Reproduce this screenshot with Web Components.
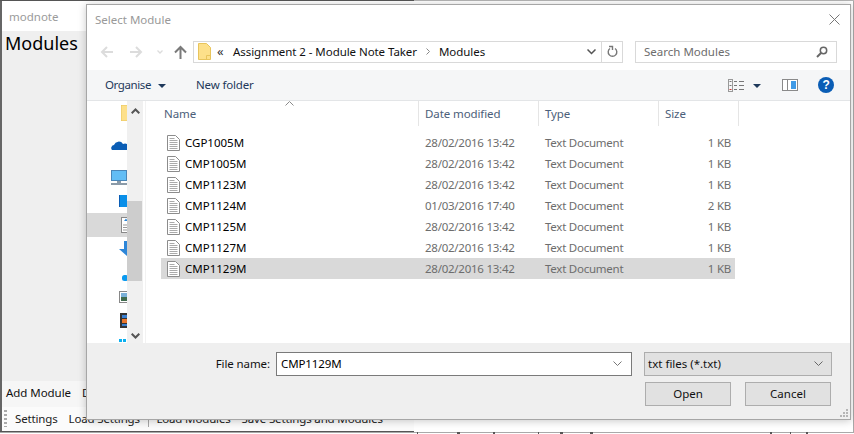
<!DOCTYPE html>
<html>
<head>
<meta charset="utf-8">
<title>modnote</title>
<style>
  html, body { margin: 0; height: 100%; overflow: hidden; background: #fff; }
  body { font: 11.5px "Noto Sans", sans-serif; }
</style>
</head>
<body>
<app-window>
  <file-dialog></file-dialog>
</app-window>

<script>
// small helper so each component only has to deal with its own markup
class Base extends HTMLElement {
  constructor(html) {
    super();
    this.attachShadow({ mode: 'open' });
    this.shadowRoot.innerHTML = html;
  }
}

class AppWindow extends Base {
  constructor() {
    super(`
      <style>
        :host { display: block; width: 854px; height: 434px; position: relative; overflow: hidden; background: #fff; }
        .back { width: 854px; height: 431px; border-top: 1px solid #b4b4b4; border-bottom: 1px solid #a9a9a9; display: flex; }
        .main { width: 412px; height: 431px; border-left: 2px solid #666; display: flex; flex-direction: column; background: #efefef; }
        .main-top { height: 1px; margin: -1px 0 0 -2px; background: #555; width: 414px; flex: none; }
        .title { height: 30px; flex: none; display: flex; align-items: center; background: #fff; color: #9b9b9b; font-size: 11.500px; padding-left: 7px; box-sizing: border-box; }
        .heading { flex: 1; padding: 0 0 0 3px; font-size: 18px; color: #000; line-height: 24px; }
        .actions { height: 26px; flex: none; box-sizing: border-box; background: #f6f6f6; padding: 0 0 3px 4px; display: flex; gap: 11px; align-items: center; color: #111; white-space: nowrap; letter-spacing: -.05px; }
        .tools { height: 24px; flex: none; box-sizing: border-box; background: #fbfbfb; display: flex; align-items: center; gap: 11px; color: #222; padding: 0 0 2px 2px; white-space: nowrap; letter-spacing: -.15px; }
        .grip { width: 3px; height: 17px; background: repeating-linear-gradient(#aaa 0 2px, transparent 2px 4px); margin-right: -3px; }
        .sep { width: 1px; height: 17px; background: #a8a8a8; margin: 0 -4px 0 -2.500px; }
        .foot { height: 1px; margin-left: -2px; width: 414px; background: #555; flex: none; }
        .right { flex: 1; border-right: 1px solid #a9a9a9; }
        svg.ticks { position: absolute; left: 414px; top: 432px; }
      </style>
      <div class="back">
        <div class="main">
          <div class="main-top"></div>
          <div class="title">modnote</div>
          <div class="heading">Modules</div>
          <div class="actions"><span>Add Module</span><span>Delete</span></div>
          <div class="tools">
            <span class="grip"></span>
            <span>Settings</span><span>Load Settings</span><span class="sep"></span><span>Load Modules</span><span>Save Settings and Modules</span>
          </div>
          <div class="foot"></div>
        </div>
        <div class="right"></div>
      </div>
      <svg class="ticks" width="439" height="2" fill="#555"><rect x="3" width="1" height="2"/><rect x="43" width="3" height="2"/><rect x="79" width="2" height="2"/><rect x="124" width="1" height="2"/><rect x="146" width="3" height="2"/><rect x="176" width="3" height="2"/><rect x="356" width="2" height="2"/><rect x="376" width="1" height="2"/><rect x="392" width="2" height="2"/></svg>
      <slot></slot>
    `);
  }
}

class FileDialog extends Base {
  constructor() {
    super(`
      <style>
        :host { position: absolute; left: 86px; top: 4px; width: 765px; height: 416px; box-sizing: border-box; border: 1px solid #a6a6a6; background: #fff; display: flex; flex-direction: column; box-shadow: 0 1px 8px rgba(0,0,0,.22); }
        .title { height: 29px; flex: none; display: flex; align-items: center; justify-content: space-between; padding: 0 10px 0 8px; color: #999; }
      </style>
      <div class="title"><span>Select Module</span>
        <svg width="11" height="11" stroke="#777" fill="none"><path d="M.5.500l10 10M10.500.500l-10 10"/></svg>
      </div>
      <nav-bar></nav-bar>
      <command-bar></command-bar>
      <file-pane></file-pane>
      <dialog-footer></dialog-footer>
    `);
  }
}

class NavBar extends Base {
  constructor() {
    super(`
      <style>
        :host { display: flex; height: 36px; flex: none; align-items: center; box-sizing: border-box; padding: 0 12px 1px 13px; }
        svg { flex: none; }
        .addr { margin-left: 6px; width: 430px; height: 22px; box-sizing: border-box; border: 1px solid #d9d9d9; display: flex; align-items: center; padding-left: 4px; color: #111; }
        .crumbs { flex: 1; display: flex; align-items: center; margin-left: 6px; white-space: nowrap; letter-spacing: -.06px; padding-bottom: 1px; }
        .more { width: 16px; color: #333; font-size: 13px; line-height: 14px; }
        .drop { width: 20px; display: flex; justify-content: center; }
        .refresh { width: 20px; height: 100%; border-left: 1px solid #d9d9d9; display: flex; align-items: center; justify-content: center; }
        .search { margin-left: 12px; width: 202px; height: 22px; box-sizing: border-box; border: 1px solid #d9d9d9; display: flex; align-items: center; justify-content: space-between; padding: 0 8px; color: #6d6d6d; }
      </style>
      <svg width="13" height="12" stroke="#dcdcdc" stroke-width="2" fill="none" style="margin-right:17px"><path d="M13 6H2M7 1L2 6l5 5"/></svg>
      <svg width="13" height="12" stroke="#dcdcdc" stroke-width="2" fill="none"><path d="M0 6h11M6 1l5 5-5 5"/></svg>
      <svg width="6" height="4" stroke="#dcdcdc" stroke-width="1.300" fill="none" style="margin-left:14px"><path d="M.5.500l2.500 2.500 2.500-2.500"/></svg>
      <svg width="13" height="14" stroke="#7a7a7a" stroke-width="2" fill="none" style="margin-left:11px"><path d="M6.500 14V2M1 7.500l5.500-5.500 5.500 5.500"/></svg>
      <div class="addr">
        <svg width="13" height="17"><path d="M.5.500h8l4 4v12H.5z" fill="#fde08a" stroke="#e8c45c"/><path d="M8.500 16.500v-4h4" fill="none" stroke="#e8c45c"/></svg>
        <div class="crumbs">
          <span class="more">«</span><span>Assignment 2 - Module Note Taker</span>
          <svg width="4" height="7" stroke="#888" fill="none" style="margin:0 9px"><path d="M.5.500l3 3-3 3"/></svg>
          <span>Modules</span>
        </div>
        <span class="drop"><svg width="9" height="6" stroke="#555" stroke-width="1.500" fill="none"><path d="M.5.500l4 4 4-4"/></svg></span>
        <span class="refresh"><svg width="11" height="13" stroke="#777" stroke-width="1.400" fill="none"><path d="M3 3.500a4.300 4.300 0 1 0 5 0M2 1.500h3.500V5"/></svg></span>
      </div>
      <div class="search"><span>Search Modules</span>
        <svg width="12" height="12" stroke="#666" fill="none"><circle cx="7.500" cy="4.500" r="3.200" stroke-width="1.500"/><path d="M5 7L1 11" stroke-width="2"/></svg>
      </div>
    `);
  }
}

class CommandBar extends Base {
  constructor() {
    super(`
      <style>
        :host { display: flex; height: 31px; flex: none; align-items: center; box-sizing: border-box; background: #f5f6f7; border-bottom: 1px solid #e3e5e7; color: #1e395b; padding: 0 16px 0 18px; letter-spacing: -.15px; }
        .caret { width: 0; height: 0; border: 4px solid transparent; border-top: 4px solid #1e395b; border-bottom: 0; display: inline-block; }
        .grow { flex: 1; }
        .label { margin-bottom: 2px; }
        .help { width: 16px; height: 16px; border-radius: 50%; background: #0a5db5; color: #fff; font: bold 12px "Liberation Sans", sans-serif; display: flex; align-items: center; justify-content: center; margin-left: 20px; }
      </style>
      <span class="label" style="width:47px;letter-spacing:-.4px">Organise</span><span class="caret" style="margin:1px 30px 0 6px"></span><span class="label">New folder</span>
      <span class="grow"></span>
      <svg width="16" height="13" fill="none"><rect x=".5" y=".5" width="4" height="12" stroke="#999"/><path d="M1.500 2.500h2M1.500 6.500h2" stroke="#777"/><path d="M1.500 10.500h2" stroke="#c33"/><path d="M6 2.500h3M11 2.500h5M6 6.500h3M11 6.500h5M6 10.500h3M11 10.500h5" stroke="#777"/></svg>
      <span class="caret" style="margin:1px 21px 0 9px"></span>
      <svg width="16" height="12"><rect x=".5" y=".5" width="15" height="11" fill="#fff" stroke="#8a8a8a"/><rect x="9" y="2" width="5" height="8" fill="#3f9ae6"/><path d="M5.500 1v10" stroke="#8a8a8a"/></svg>
      <span class="help">?</span>
    `);
  }
}

class SideBar extends Base {
  constructor() {
    super(`
      <style>
        :host { display: flex; flex: none; width: 59px; height: 100%; }
        .items { width: 40px; overflow: hidden; display: flex; flex-direction: column; flex: none; }
        .item { flex: none; display: flex; align-items: flex-start; box-sizing: border-box; }
        .sel { background: #d9d9d9; }
        .bar { width: 16px; background: #f0f0f0; display: flex; flex-direction: column; align-items: center; flex: none; }
        .thumb { width: 15px; height: 80px; background: #cdcdcd; margin: 87px 1px 52px 0; }
        .up { margin-top: 7px; }
        .gap { width: 1px; background: #f2f2f2; margin-left: auto; }
      </style>
      <div class="items">
        <div class="item" style="height:22px;padding:4px 0 0 34px"><svg width="14" height="16"><rect width="14" height="16" fill="#fde08a" stroke="#e8c45c"/></svg></div>
        <div class="item" style="height:47px;padding:17px 0 0 24px"><svg width="18" height="11"><path d="M1 10a3 3 0 0 1 2-5 5 5 0 0 1 9-1 4 4 0 0 1 5 6z" fill="#0a5db5"/></svg></div>
        <div class="item" style="height:25px;padding-left:24px"><svg width="16" height="15"><rect x=".5" y=".5" width="15" height="10" fill="#62bdf5" stroke="#4a86b8"/><rect x="6" y="11" width="4" height="2" fill="#8a9aa8"/><rect y="13" width="16" height="2" fill="#8a9aa8"/></svg></div>
        <div class="item" style="height:18px;padding-left:32px"><svg width="8" height="12"><rect width="8" height="12" fill="#0a8fe8"/><rect width="1" height="12" fill="#0a5db5"/></svg></div>
        <div class="item sel" style="height:24px;padding:4px 0 0 34px"><svg width="6" height="16"><rect x=".5" y=".5" width="9" height="15" fill="#fff" stroke="#888"/><path d="M3 4l2-2.500 2 2.500z" fill="#2a86d8"/><path d="M2 8h6M2 10.500h6M2 13h6" stroke="#999"/></svg></div>
        <div class="item" style="height:38px;padding:4px 0 0 32px"><svg width="8" height="15"><path d="M5 0h3v15L0 8h5z" fill="#2d86d8"/></svg></div>
        <div class="item" style="height:16px;padding-left:35px"><svg width="5" height="6"><rect width="6" height="6" rx="2.500" fill="#0a9af0"/></svg></div>
        <div class="item" style="height:22px;padding-left:32px"><svg width="8" height="12"><rect x=".5" y=".5" width="9" height="11" fill="#fff" stroke="#888"/><rect x="2" y="2" width="6" height="4" fill="#7ab0d8"/><rect x="2" y="6" width="6" height="4" fill="#3f6b4e"/></svg></div>
        <div class="item" style="height:26px;padding-left:33px"><svg width="7" height="15"><rect width="7" height="15" fill="#333"/><rect x="2" y="2" width="5" height="3" fill="#3a7fd0"/><rect x="2" y="6" width="5" height="4" fill="#e8762c"/><rect x="2" y="11" width="5" height="2" fill="#3a7fd0"/></svg></div>
        <div class="item" style="height:4px;padding-left:32px"><svg width="8" height="3"><rect width="3" height="3" fill="#0ab0f0"/><rect x="4" width="3" height="3" fill="#0ab0f0"/></svg></div>
      </div>
      <div class="bar">
        <svg class="up" width="9" height="6" stroke="#555" stroke-width="2" fill="none"><path d="M.7 5.300L4.500 1.500l3.800 3.800"/></svg>
        <div class="thumb"></div>
        <svg width="9" height="6" stroke="#555" stroke-width="2" fill="none"><path d="M.7.700l3.800 3.800 3.800-3.800"/></svg>
      </div>
      <div class="gap"></div>
    `);
  }
}

class FileRow extends Base {
  constructor() {
    super(`
      <style>
        :host { display: grid; grid-template-columns: 264px 120px 120px 70px; height: 21px; align-items: center; color: #6d6d6d; width: 574px; letter-spacing: -.25px; white-space: nowrap; }
        :host([selected]) { background: #d9d9d9; }
        .name { display: flex; align-items: center; gap: 5px; padding-left: 6px; color: #000; letter-spacing: 0; }
        .size { text-align: right; padding-right: 4px; }
      </style>
      <span class="name">
        <svg width="13" height="16" fill="none"><path d="M.5.500h8l4 4v11H.5z" fill="#fff" stroke="#8c8c8c"/><path d="M2.500 5.500h8M2.500 7.500h8M2.500 9.500h8M2.500 11.500h8M2.500 13.500h8M2.500 3.500h5" stroke="#aaa"/></svg>
        <slot></slot>
      </span>
      <span><slot name="date"></slot></span>
      <span><slot name="type"></slot></span>
      <span class="size"><slot name="size"></slot></span>
    `);
  }
}

class FilePane extends Base {
  constructor() {
    super(`
      <style>
        :host { display: flex; flex: 1; min-height: 0; overflow: hidden; }
        .list { flex: 1; padding-left: 15px; position: relative; }
        .head { display: grid; grid-template-columns: 258px 120px 120px 80px; height: 25px; width: 578px; color: #4c607a; letter-spacing: -.1px; }
        .head span { border-right: 1px solid #e5e5e5; padding: 5px 0 0 6px; box-sizing: border-box; }
        .head span:first-child { padding-left: 3px; }
        .sort { position: absolute; left: 139px; top: 0; }
        .rows { margin-top: 6px; }
      </style>
      <side-bar></side-bar>
      <div class="list">
        <svg class="sort" width="9" height="5" stroke="#8a8a8a" fill="none"><path d="M.5 4.500l4-4 4 4"/></svg>
        <div class="head"><span>Name</span><span>Date modified</span><span>Type</span><span>Size</span></div>
        <div class="rows" id="rows"></div>
      </div>
    `);
    const files = [
      ['CGP1005M', '28/02/2016 13:42', '1 KB'],
      ['CMP1005M', '28/02/2016 13:42', '1 KB'],
      ['CMP1123M', '28/02/2016 13:42', '1 KB'],
      ['CMP1124M', '01/03/2016 17:40', '2 KB'],
      ['CMP1125M', '28/02/2016 13:42', '1 KB'],
      ['CMP1127M', '28/02/2016 13:42', '1 KB'],
      ['CMP1129M', '28/02/2016 13:42', '1 KB'],
    ];
    const rows = this.shadowRoot.getElementById('rows');
    files.forEach(([name, date, size], i) => {
      const row = document.createElement('file-row');
      if (i === files.length - 1) row.setAttribute('selected', '');
      row.innerHTML = `${name}<span slot="date">${date}</span><span slot="type">Text Document</span><span slot="size">${size}</span>`;
      rows.appendChild(row);
    });
  }
}

class DialogFooter extends Base {
  constructor() {
    super(`
      <style>
        :host { display: block; height: 76px; flex: none; box-sizing: border-box; background: #efefef; padding: 9px 18px 0 0; position: relative; color: #111; }
        .line { display: flex; align-items: center; height: 24px; }
        .label { width: 189px; text-align: right; padding: 0 6px 2px 0; box-sizing: border-box; flex: none; letter-spacing: -.1px; }
        .input { width: 356px; height: 24px; box-sizing: border-box; border: 1px solid #7a7a7a; background: #fff; display: flex; align-items: center; justify-content: space-between; padding: 0 9px 2px 4px; color: #000; flex: none; letter-spacing: -.1px; }
        .filter { margin-left: 12px; width: 188px; height: 24px; box-sizing: border-box; border: 1px solid #adadad; background: #e1e1e1; display: flex; align-items: center; justify-content: space-between; padding: 0 8px 2px 3px; flex: none; }
        .buttons { display: flex; justify-content: flex-end; gap: 14px; margin: 6px 1px 0 0; }
        .buttons span { width: 86px; height: 24px; box-sizing: border-box; border: 1px solid #adadad; background: #e1e1e1; display: flex; align-items: center; justify-content: center; padding-bottom: 2px; }
        svg.grip { position: absolute; right: 2px; bottom: 2px; }
      </style>
      <div class="line">
        <span class="label">File name:</span>
        <div class="input"><span>CMP1129M</span><svg width="9" height="5" stroke="#777" fill="none"><path d="M.5.500l4 4 4-4"/></svg></div>
        <div class="filter"><span>txt files (*.txt)</span><svg width="9" height="5" stroke="#666" fill="none"><path d="M.5.500l4 4 4-4"/></svg></div>
      </div>
      <div class="buttons"><span>Open</span><span>Cancel</span></div>
      <svg class="grip" width="8" height="8" fill="#b5b5b5"><rect x="6" width="2" height="2"/><rect x="3" y="3" width="2" height="2"/><rect x="6" y="3" width="2" height="2"/><rect y="6" width="2" height="2"/><rect x="3" y="6" width="2" height="2"/><rect x="6" y="6" width="2" height="2"/></svg>
    `);
  }
}

customElements.define('app-window', AppWindow);
customElements.define('file-dialog', FileDialog);
customElements.define('nav-bar', NavBar);
customElements.define('command-bar', CommandBar);
customElements.define('side-bar', SideBar);
customElements.define('file-row', FileRow);
customElements.define('file-pane', FilePane);
customElements.define('dialog-footer', DialogFooter);
</script>
</body>
</html>
